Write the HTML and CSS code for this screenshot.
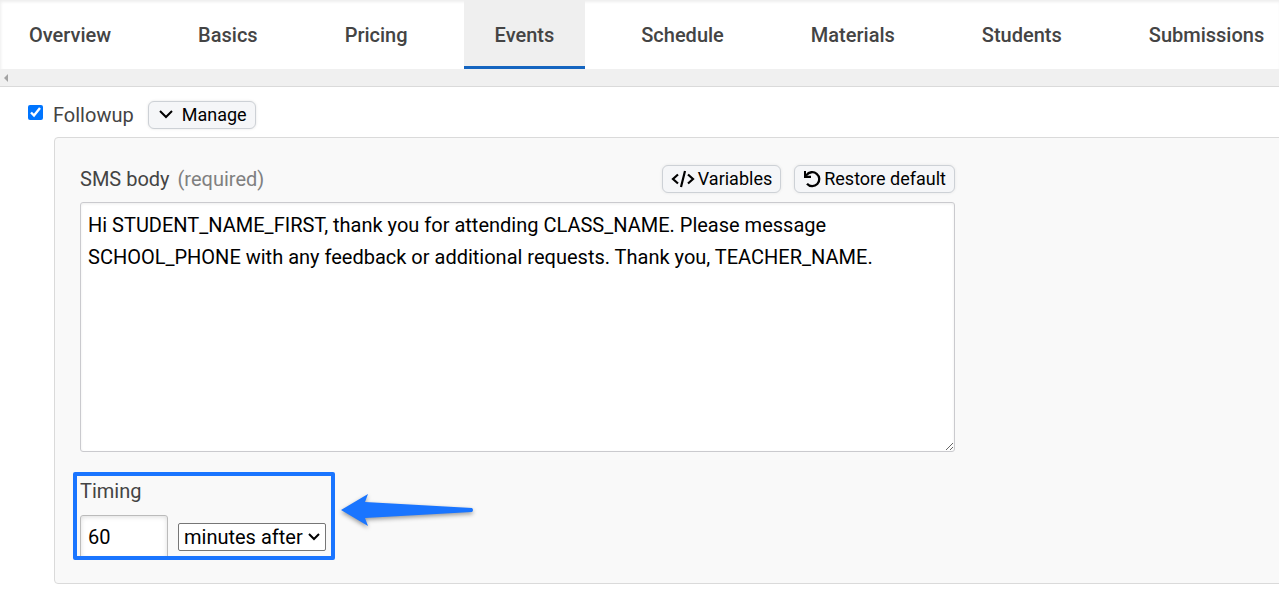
FILE: index.html
```html
<!doctype html>
<html lang="en">
  <head>
    <meta charset="utf-8">
    <meta name="viewport" content="width=device-width, initial-scale=1">
    <title>Events</title>
    <link rel="stylesheet" href="styles.css">
  </head>
  <body>
    <nav class="tabs">
      <a class="tab" href="#overview">Overview</a>
      <a class="tab" href="#basics">Basics</a>
      <a class="tab" href="#pricing">Pricing</a>
      <a class="tab active" href="#events">Events</a>
      <a class="tab" href="#schedule">Schedule</a>
      <a class="tab" href="#materials">Materials</a>
      <a class="tab" href="#students">Students</a>
      <a class="tab" href="#submissions">Submissions</a>
    </nav>
    <div class="scroll-track">
      <svg width="4" height="8" viewBox="0 0 4 8"><path d="M4 0v8L0 4z" fill="#a3a3a3"/></svg>
    </div>
    <main class="content">
      <div class="event-header">
        <input type="checkbox" id="followup" checked>
        <label for="followup">Followup</label>
        <button type="button" class="btn btn-manage">
          <svg width="16" height="10" viewBox="0 0 16 10"><path d="M2 1l6 6 6-6" fill="none" stroke="#000" stroke-width="2"/></svg>
          Manage
        </button>
      </div>
      <section class="panel">
        <div class="field">
          <div class="field-header">
            <label for="sms-body">SMS body <span class="hint">(required)</span></label>
            <div class="actions">
              <button type="button" class="btn">
                <svg width="24" height="18" viewBox="0 0 24 18"><path d="M7 4.500L2 9l5 4.500M17 4.500L22 9l-5 4.500M14 1l-4 16" fill="none" stroke="#000" stroke-width="2.200"/></svg>
                Variables
              </button>
              <button type="button" class="btn">
                <svg width="18" height="18" viewBox="0 0 18 18"><path d="M3.500 5.200A7 7 0 1 1 4 13.800" fill="none" stroke="#000" stroke-width="2.300"/><path d="M1 1v7h7V5.800H4.500L3 4.500V1z" fill="#000"/></svg>
                Restore default
              </button>
            </div>
          </div>
          <textarea id="sms-body" class="sms-body" spellcheck="false">Hi STUDENT_NAME_FIRST, thank you for attending CLASS_NAME. Please message SCHOOL_PHONE with any feedback or additional requests. Thank you, TEACHER_NAME.</textarea>
        </div>
        <div class="timing">
          <label for="timing">Timing</label>
          <div class="timing-row">
            <input type="text" id="timing" class="amount" value="60">
            <select class="unit" aria-label="Timing unit">
              <option>minutes after</option>
            </select>
          </div>
          <div class="highlight"></div>
          <svg class="arrow" width="136" height="40" viewBox="0 0 136 40"><path d="M1 20L28 4l-3 8 107 6q2 2 0 4L25 28l3 8z" fill="#1a75ff"/></svg>
        </div>
      </section>
    </main>
  </body>
</html>
```
FILE: styles.css
```css
* {
  box-sizing: border-box;
}
body {
  margin: 0;
  background: #fff;
  color: #444;
  font-family: Roboto, Arial, sans-serif;
  font-size: 20px;
  line-height: 32px;
  overflow-x: hidden;
}
button, input, select, textarea {
  font: inherit;
  color: #000;
}
.tabs {
  display: flex;
  gap: 25px;
  overflow: hidden;
  box-shadow: inset 1px 2px 3px #eee;
}
.tab {
  flex: none;
  padding: 19px 31px 15px;
  border-bottom: 3px solid transparent;
  color: #444;
  font-weight: 500;
  text-decoration: none;
}
.tab:first-child {
  padding-left: 29px;
}
.tab.active {
  background: #efefef;
  border-bottom-color: #1565c0;
}
.scroll-track {
  display: flex;
  align-items: center;
  height: 18px;
  padding-left: 4px;
  background: #f0f0f0;
  border-bottom: 1px solid #dadada;
}
.content {
  padding: 14px 0 31px 28px;
}
.event-header {
  display: flex;
  align-items: center;
  height: 28px;
}
.event-header input {
  width: 15px;
  height: 15px;
  margin: 0 10px 6px 0;
}
.btn {
  display: flex;
  align-items: center;
  gap: 3px;
  height: 28px;
  padding: 0 8px;
  border: 1px solid #cdd1d6;
  border-radius: 6px;
  background: #f5f6f8;
  box-shadow: 0 0 3px #e4e4e4;
  font-size: 18px;
}
.btn-manage {
  gap: 8px;
  margin-left: 14px;
  padding-left: 9px;
}
.panel {
  margin: 8px -8px 0 26px;
  padding: 25px 25px 24px;
  border: 1px solid #dadada;
  border-radius: 4px;
  background: #f9f9f9;
}
.field {
  max-width: 875px;
}
.field-header {
  display: flex;
  align-items: center;
  justify-content: space-between;
  margin-bottom: 7px;
}
.hint {
  margin-left: 3px;
  color: #808080;
}
.actions {
  display: flex;
  gap: 13px;
}
.sms-body {
  display: block;
  width: 100%;
  height: 250px;
  padding: 6px 7px;
  border: 1px solid #cacace;
  border-radius: 3px;
  background: #fff;
  box-shadow: inset 0 1px 3px #eee;
}
.timing {
  position: relative;
  width: 246px;
  margin-top: 23px;
}
.timing-row {
  display: flex;
  align-items: center;
  gap: 10px;
  margin-top: 8px;
}
.amount {
  width: 88px;
  height: 44px;
  padding: 0 7px;
  border: 1px solid #bbb;
  border-radius: 3px;
  box-shadow: inset 0 1px 5px #ddd;
}
.unit {
  flex: 1;
  height: 28px;
  padding: 0 20px 0 5px;
  border: 1px solid #767676;
  border-radius: 2px;
  appearance: none;
  line-height: 26px;
  background: #fff url("data:image/svg+xml,%3Csvg xmlns='http://www.w3.org/2000/svg' width='12' height='8' viewBox='0 0 12 8'%3E%3Cpath d='M1 1l5 5 5-5' fill='none' stroke='%23000' stroke-width='2'/%3E%3C/svg%3E") no-repeat right 5px center;
}
.highlight {
  position: absolute;
  inset: -3px -9px -1px -7px;
  border: 4px solid #1a75ff;
  border-radius: 2px;
  pointer-events: none;
}
.arrow {
  position: absolute;
  top: 15px;
  left: 260px;
  filter: drop-shadow(0 2px 2px #999);
}
```
